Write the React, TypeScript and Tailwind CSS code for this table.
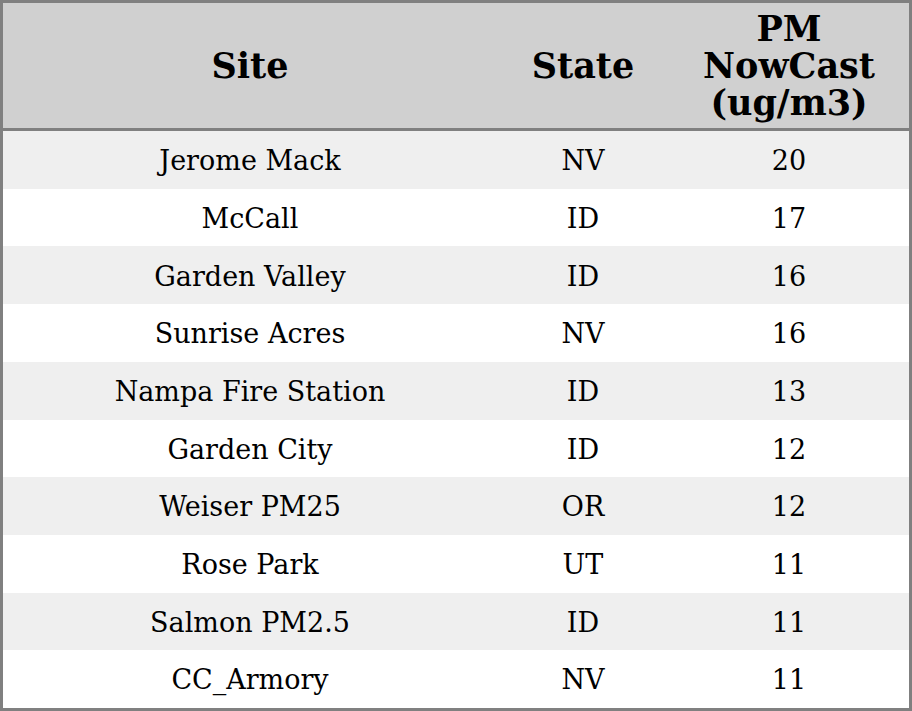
const rows = [
  { site: "Jerome Mack", state: "NV", pm: 20 },
  { site: "McCall", state: "ID", pm: 17 },
  { site: "Garden Valley", state: "ID", pm: 16 },
  { site: "Sunrise Acres", state: "NV", pm: 16 },
  { site: "Nampa Fire Station", state: "ID", pm: 13 },
  { site: "Garden City", state: "ID", pm: 12 },
  { site: "Weiser PM25", state: "OR", pm: 12 },
  { site: "Rose Park", state: "UT", pm: 11 },
  { site: "Salmon PM2.5", state: "ID", pm: 11 },
  { site: "CC_Armory", state: "NV", pm: 11 },
];

export default function App() {
  return (
    <div className="w-[912px] h-[711px] border-[3px] border-[#808080] bg-white text-black font-['DejaVu_Serif',serif] flex flex-col">
      {/* Header */}
      <div className="grid grid-cols-[494px_172px_240px] h-[125px] bg-[#d0d0d0] border-b-[3px] border-[#808080] box-content text-[35px] font-bold leading-[37px]">
        <div className="flex items-center justify-center">Site</div>
        <div className="flex items-center justify-center">State</div>
        <div className="flex items-center justify-center text-center">
          PM
          <br />
          NowCast
          <br />
          (ug/m3)
        </div>
      </div>

      {/* Body */}
      <div className="flex-1 flex flex-col text-[27px]">
        {rows.map((r, i) => (
          <div
            key={r.site}
            className={`flex-1 grid grid-cols-[494px_172px_240px] items-center text-center pt-[3px] ${i % 2 === 0 ? "bg-[#efefef]" : "bg-white"}`}
          >
            <div>{r.site}</div>
            <div>{r.state}</div>
            <div>{r.pm}</div>
          </div>
        ))}
      </div>
    </div>
  );
}
